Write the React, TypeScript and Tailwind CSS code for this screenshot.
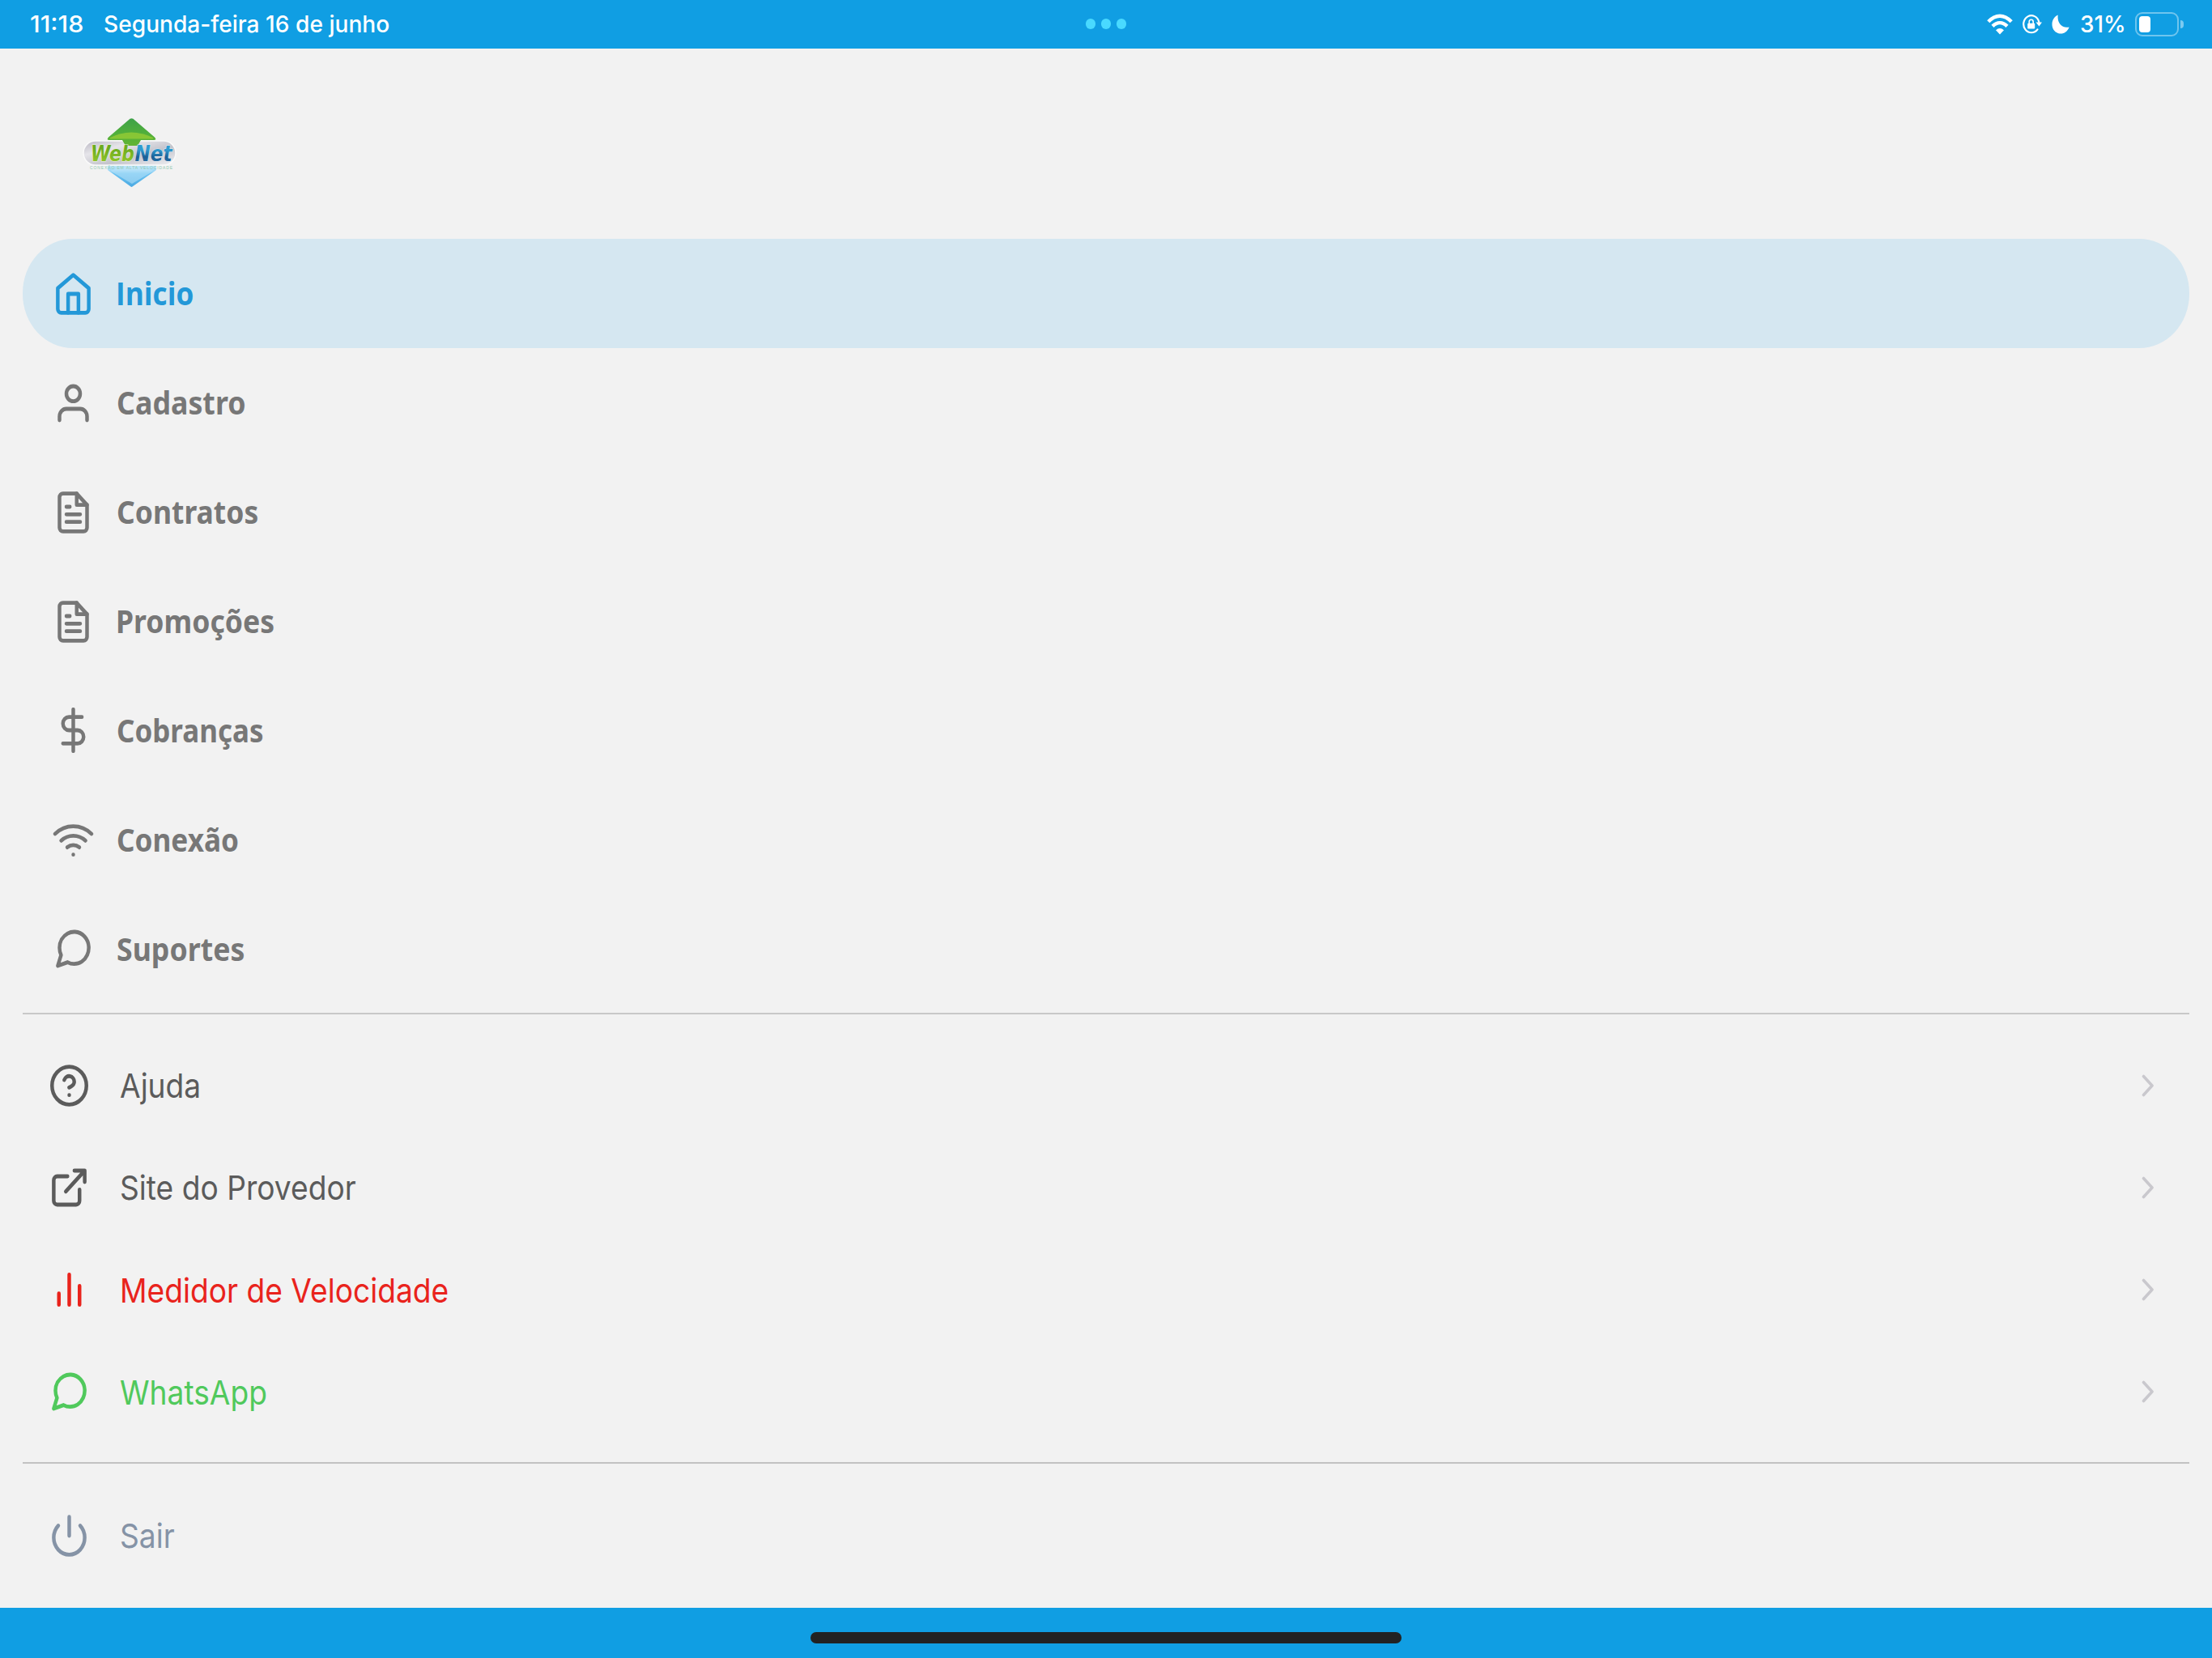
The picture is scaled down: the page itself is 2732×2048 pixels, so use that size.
import type { ReactNode } from "react";

function Icon({ children, className = "" }: { children: ReactNode; className?: string }) {
  return (
    <svg
      viewBox="0 0 24 24"
      preserveAspectRatio="none"
      fill="none"
      stroke="currentColor"
      strokeWidth="2.100"
      strokeLinecap="round"
      strokeLinejoin="round"
      className={`h-14 w-[51px] shrink-0 ${className}`}
    >
      {children}
    </svg>
  );
}

const HomeIcon = () => (
  <Icon>
    <path d="M3 9l9-7 9 7v11a2 2 0 0 1-2 2H5a2 2 0 0 1-2-2z" />
    <path d="M9 22V12h6v10" />
  </Icon>
);

const UserIcon = () => (
  <Icon>
    <path d="M20 21v-2a4 4 0 0 0-4-4H8a4 4 0 0 0-4 4v2" />
    <circle cx="12" cy="7" r="4" />
  </Icon>
);

const FileIcon = () => (
  <Icon>
    <path d="M14 2H6a2 2 0 0 0-2 2v16a2 2 0 0 0 2 2h12a2 2 0 0 0 2-2V8z" />
    <path d="M14 2v6h6M16 13H8M16 17H8M10 9H8" />
  </Icon>
);

const DollarIcon = () => (
  <Icon>
    <path d="M12 1v22M17 5H9.500a3.500 3.500 0 0 0 0 7h5a3.500 3.500 0 0 1 0 7H6" />
  </Icon>
);

const WifiIcon = () => (
  <Icon>
    <path d="M5 12.550a11 11 0 0 1 14.080 0M1.420 9a16 16 0 0 1 21.160 0M8.530 16.110a6 6 0 0 1 6.950 0M12 20h.01" />
  </Icon>
);

const ChatIcon = () => (
  <Icon>
    <path d="M21 11.500a8.380 8.380 0 0 1-.9 3.800 8.500 8.500 0 0 1-7.600 4.700 8.380 8.380 0 0 1-3.800-.9L3 21l1.900-5.700a8.380 8.380 0 0 1-.9-3.800 8.500 8.500 0 0 1 4.700-7.600 8.380 8.380 0 0 1 3.800-.9h.5a8.480 8.480 0 0 1 8 8v.5z" />
  </Icon>
);

const HelpIcon = () => (
  <Icon>
    <circle cx="12" cy="12" r="10" />
    <path d="M9.090 9a3 3 0 0 1 5.830 1c0 2-3 3-3 3M12 17h.01" />
  </Icon>
);

const ExternalIcon = () => (
  <Icon>
    <path d="M18 13v6a2 2 0 0 1-2 2H5a2 2 0 0 1-2-2V8a2 2 0 0 1 2-2h6M15 3h6v6M10 14L21 3" />
  </Icon>
);

const BarsIcon = () => (
  <Icon>
    <path d="M18 20V10M12 20V4M6 20v-6" />
  </Icon>
);

const PowerIcon = () => (
  <Icon>
    <path d="M18.360 6.640a9 9 0 1 1-12.730 0M12 2v10" />
  </Icon>
);

const Chevron = () => (
  <svg viewBox="0 0 16 28" fill="none" className="h-7 w-4 text-[#c9c8cd]">
    <path d="M2.500 2.500L13 14L2.500 25.500" stroke="currentColor" strokeWidth="3.600" strokeLinecap="round" strokeLinejoin="round" />
  </svg>
);

function Logo() {
  return (
    <svg viewBox="0 0 150 120" className="h-[120px] w-[150px]">
      <defs>
        <linearGradient id="green" x1="0" y1="0" x2="0" y2="1">
          <stop offset="0" stopColor="#3da148" />
          <stop offset="0.5" stopColor="#4fae3c" />
          <stop offset="1" stopColor="#62b434" />
        </linearGradient>
        <linearGradient id="blue" x1="0" y1="0" x2="0" y2="1">
          <stop offset="0" stopColor="#d8f1fb" />
          <stop offset="0.35" stopColor="#a8dcf8" />
          <stop offset="0.5" stopColor="#6cc3f2" />
          <stop offset="1" stopColor="#4aa9e2" />
        </linearGradient>
        <linearGradient id="silver" x1="0" y1="0" x2="1" y2="1">
          <stop offset="0" stopColor="#b9b7c2" />
          <stop offset="0.3" stopColor="#e6e5ea" />
          <stop offset="0.6" stopColor="#c4c4cc" />
          <stop offset="1" stopColor="#f0f0f3" />
        </linearGradient>
        <linearGradient id="web" x1="0" y1="0" x2="0" y2="1">
          <stop offset="0.3" stopColor="#6cab1f" />
          <stop offset="1" stopColor="#9bcb2c" />
        </linearGradient>
        <linearGradient id="net" x1="0" y1="0" x2="0" y2="1">
          <stop offset="0.35" stopColor="#2f9bd0" />
          <stop offset="0.65" stopColor="#1c5f96" />
          <stop offset="1" stopColor="#2a78ad" />
        </linearGradient>
      </defs>
      <path d="M42 68L72.500 72L103 68L103 80L73.500 100.500Q72.500 101.300 71.500 100.500L43 80Z" fill="url(#blue)" />
      <path d="M46 81Q72 71 100 81L73 97Z" fill="#c3e8fa" opacity="0.5" />
      <rect x="13" y="44" width="114" height="30" rx="15" fill="url(#silver)" stroke="#fafafa" strokeWidth="1.500" />
      <path d="M70.500 16.800Q72.500 15.500 74.500 16.800L101 39.500Q104 43 100 43H84L80 50H65L61 43H45Q41 43 44 39.500Z" fill="url(#green)" />
      <path d="M46 40Q72 27 99 40Q100 41.500 97 41.500H48Q45 41.500 46 40Z" fill="#95cc35" opacity="0.8" />
      <text
        x="22"
        y="68.500"
        textLength="54"
        lengthAdjust="spacingAndGlyphs"
        fill="url(#web)"
        stroke="#e9f0dc"
        strokeWidth="1.200"
        paintOrder="stroke"
        className="font-['DejaVu_Sans'] text-[26px] font-bold italic"
      >
        Web
      </text>
      <text
        x="76.500"
        y="68.500"
        textLength="46"
        lengthAdjust="spacingAndGlyphs"
        fill="url(#net)"
        stroke="#dfe7ee"
        strokeWidth="1.200"
        paintOrder="stroke"
        className="font-['DejaVu_Sans'] text-[26px] font-bold italic"
      >
        Net
      </text>
      <text
        x="21"
        y="79"
        textLength="102"
        lengthAdjust="spacing"
        fill="#93cbb2"
        className="font-['Liberation_Sans'] text-[5px]"
      >
        CONEXÃO EM ALTA VELOCIDADE
      </text>
    </svg>
  );
}

function StatusBar() {
  return (
    <header className="grid h-[59.5px] grid-cols-3 items-center bg-[#109ee3] font-['Inter',sans-serif] text-[29px] font-medium leading-none text-white">
      <div className="flex items-center pl-[37px]">
        <span className="w-[91px] origin-left scale-x-[1.050] whitespace-nowrap">11:18</span>
        <span className="origin-left scale-x-[0.970] whitespace-nowrap">Segunda-feira 16 de junho</span>
      </div>
      <div className="flex items-center justify-center gap-[7px]">
        <i className="h-[13px] w-[12px] rounded-full bg-[#49d9ff]" />
        <i className="h-[13px] w-[12px] rounded-full bg-[#49d9ff]" />
        <i className="h-[13px] w-[12px] rounded-full bg-[#49d9ff]" />
      </div>
      <div className="flex items-center justify-end pr-[35px]">
        <svg viewBox="0 0 32 26" className="mr-[11px] h-[26px] w-8" fill="none" stroke="currentColor" strokeWidth="4.400">
          <path d="M1.800 9.800Q8.500 2.700 16 2.700T30.200 9.800" />
          <path d="M7 15.400Q11.200 11.100 16 11.100T25 15.400" />
          <path d="M11 20.300Q16 15.800 21 20.300L16 25.500Z" fill="currentColor" stroke="none" />
        </svg>
        <svg viewBox="0 0 25 24" className="mr-3 h-6 w-[25px]" fill="none">
          <path d="M21.300 9A9.700 10.500 0 1 0 19.500 18.300" stroke="currentColor" strokeWidth="2.200" strokeLinecap="round" />
          <path d="M17.500 9.500H25L21.400 14.500Z" fill="currentColor" />
          <rect x="7.200" y="10.800" width="9" height="6.800" rx="1" fill="currentColor" />
          <path d="M9.200 11V9a2.500 2.700 0 0 1 5 0v2" stroke="currentColor" strokeWidth="1.600" />
        </svg>
        <svg viewBox="0 0 22 24" className="mr-[13px] h-6 w-[22px]">
          <path d="M7.800 0.500C6.300 8.500 11.500 17.500 21.600 15.500C19.500 21 15.500 23.500 11.300 23.500C5 23.500 0.500 18.500 0.500 12C0.500 6.800 3.500 2.300 7.800 0.500Z" fill="currentColor" />
        </svg>
        <span className="w-[68.5px] origin-left scale-x-[0.960] whitespace-nowrap">31%</span>
        <div className="flex h-[30px] w-[54px] rounded-[9px] border-2 border-white/40 p-[3px]">
          <div className="w-[14px] rounded-[4px] bg-white" />
        </div>
        <div className="ml-[2px] h-[10px] w-[4px] rounded-r-full bg-white/45" />
      </div>
    </header>
  );
}

const mainItems = [
  { label: "Inicio", icon: <HomeIcon />, fit: "ml-[27px] scale-x-[0.903] font-['Open_Sans',sans-serif]", active: true },
  { label: "Cadastro", icon: <UserIcon />, fit: "ml-7 scale-x-[0.917]" },
  { label: "Contratos", icon: <FileIcon />, fit: "ml-7 scale-x-[0.910]" },
  { label: "Promoções", icon: <FileIcon />, fit: "ml-[27px] scale-x-[0.912]" },
  { label: "Cobranças", icon: <DollarIcon />, fit: "ml-7 scale-x-[0.896]" },
  { label: "Conexão", icon: <WifiIcon />, fit: "ml-7 scale-x-[0.901]" },
  { label: "Suportes", icon: <ChatIcon />, fit: "ml-7 scale-x-[0.915]" },
];

const linkItems = [
  { label: "Ajuda", icon: <HelpIcon />, tone: "text-[#5b5b5b]" },
  { label: "Site do Provedor", icon: <ExternalIcon />, tone: "text-[#5b5b5b]" },
  { label: "Medidor de Velocidade", icon: <BarsIcon />, tone: "text-[#e9231c]" },
  { label: "WhatsApp", icon: <ChatIcon />, tone: "text-[#50c95c]" },
];

function LinkRow({ label, icon, tone, arrow }: { label: string; icon: ReactNode; tone: string; arrow?: boolean }) {
  return (
    <li className={`flex h-[126.200px] items-center pl-8 pr-[43px] ${tone}`}>
      {icon}
      <span className="ml-[37px] origin-left scale-x-[0.906] whitespace-nowrap pt-[2px] text-[41px] leading-none">{label}</span>
      {arrow && (
        <span className="ml-auto">
          <Chevron />
        </span>
      )}
    </li>
  );
}

export default function App() {
  return (
    <div className="flex h-[2048px] w-[2732px] flex-col overflow-hidden bg-[#f2f2f2] font-['Inter',sans-serif]">
      <StatusBar />
      <main className="flex flex-1 flex-col px-7">
        <div className="h-[235.300px] pl-[62px] pt-[70.5px]">
          <Logo />
        </div>
        <ul className="font-['Noto_Sans',sans-serif]">
          {mainItems.map(({ label, icon, fit, active }) => (
            <li
              key={label}
              className={`flex h-[134.850px] items-center rounded-[62px/67px] pl-[36.5px] pt-[1.5px] ${
                active ? "bg-[#d5e7f1] text-[#2398d8]" : "text-[#777777]"
              }`}
            >
              {icon}
              <span className={`origin-left whitespace-nowrap pb-[2px] text-[39px] font-bold leading-none ${fit}`}>{label}</span>
            </li>
          ))}
        </ul>
        <hr className="mt-[12.5px] h-[2px] border-0 bg-[#c8c8c8]" />
        <ul className="mt-[24.5px]">
          {linkItems.map((item) => (
            <LinkRow key={item.label} {...item} arrow />
          ))}
        </ul>
        <hr className="mt-[23.5px] h-[2px] border-0 bg-[#c2c2c2]" />
        <ul className="mt-[25.5px]">
          <LinkRow label="Sair" icon={<PowerIcon />} tone="text-[#8593a6]" />
        </ul>
      </main>
      <footer className="flex h-[62.5px] shrink-0 justify-center bg-[#109ee3] pt-[30px]">
        <div className="h-[14px] w-[730px] rounded-full bg-[#222222]" />
      </footer>
    </div>
  );
}
